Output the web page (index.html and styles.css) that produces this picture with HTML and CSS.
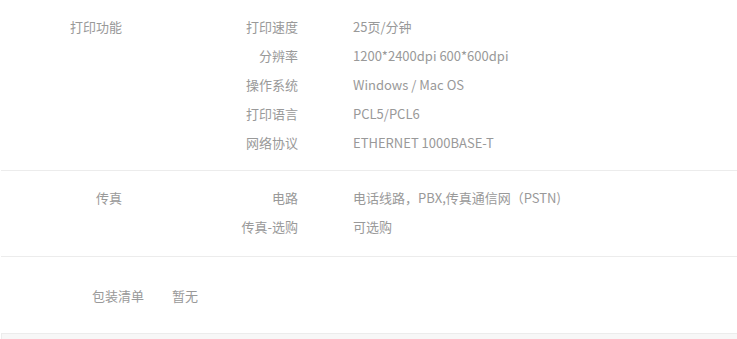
FILE: index.html
```html
<!DOCTYPE html>
<html lang="zh">
<head>
<meta charset="utf-8">
<link rel="stylesheet" href="styles.css">
</head>
<body>
<div class="specs">
  <section class="group">
    <div class="group-name">打印功能</div>
    <div class="rows">
      <div class="row"><span class="label">打印速度</span><span class="value">25页/分钟</span></div>
      <div class="row"><span class="label">分辨率</span><span class="value">1200*2400dpi 600*600dpi</span></div>
      <div class="row"><span class="label">操作系统</span><span class="value">Windows / Mac OS</span></div>
      <div class="row"><span class="label">打印语言</span><span class="value">PCL5/PCL6</span></div>
      <div class="row"><span class="label">网络协议</span><span class="value">ETHERNET 1000BASE-T</span></div>
    </div>
  </section>
  <section class="group group-fax">
    <div class="group-name">传真</div>
    <div class="rows">
      <div class="row"><span class="label">电路</span><span class="value">电话线路，PBX,传真通信网（PSTN)</span></div>
      <div class="row"><span class="label">传真-选购</span><span class="value">可选购</span></div>
    </div>
  </section>
  <section class="package">
    <span class="package-name">包装清单</span>
    <span class="package-value">暂无</span>
  </section>
  <div class="footer-box"></div>
</div>
</body>
</html>
```
FILE: styles.css
```css
html, body {
  margin: 0;
  padding: 0;
  background: #fff;
}
body {
  font-family: "Noto Sans CJK SC", "Open Sans", sans-serif;
  font-size: 13px;
  color: #999;
}
.specs {
  width: 737px;
}
.group {
  display: flex;
  padding: 12px 0 13px;
  border-bottom: 1px solid #ececec;
  margin-left: 1px;
}
.group-fax {
  padding-bottom: 15px;
}
.group-name {
  width: 121px;
  text-align: right;
  line-height: 29px;
  flex: none;
}
.rows {
  display: flex;
  flex-direction: column;
}
.row {
  display: flex;
  height: 29px;
  line-height: 29px;
}
.label {
  width: 176px;
  text-align: right;
  flex: none;
}
.value {
  padding-left: 55px;
  white-space: nowrap;
}
.package {
  display: flex;
  align-items: center;
  height: 76px;
  padding-left: 92px;
  gap: 28px;
}
.footer-box {
  margin-left: 1px;
  height: 8px;
  background: #f7f7f7;
  border-top: 1px solid #ececec;
  border-left: 1px solid #ececec;
}
```
